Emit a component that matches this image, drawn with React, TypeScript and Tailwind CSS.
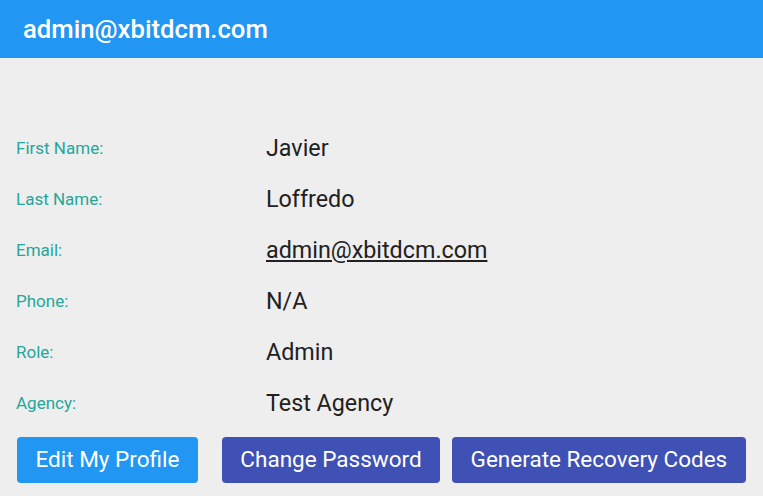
import React from "react";

const rows = [
  { label: "First Name:", value: "Javier" },
  { label: "Last Name:", value: "Loffredo" },
  { label: "Email:", value: "admin@xbitdcm.com", link: true },
  { label: "Phone:", value: "N/A" },
  { label: "Role:", value: "Admin" },
  { label: "Agency:", value: "Test Agency" },
];

export default function App() {
  return (
    <div className="min-h-[496px] w-full bg-[#eeeeee] font-['Roboto','Liberation_Sans',sans-serif]">
      <div className="flex h-[58px] items-center bg-[#2196f3] px-[23px]">
        <h1 className="text-[25.7px] font-medium text-white">admin@xbitdcm.com</h1>
      </div>

      <div className="pt-[65px]">
        {rows.map((row) => (
          <div key={row.label} className="flex h-[51px] items-center">
            <div className="w-[266px] pl-[16px] text-[17px] text-[#26a69a]">{row.label}</div>
            <div className="text-[23.3px] text-[#212121]">
              {row.link ? <a className="underline">{row.value}</a> : row.value}
            </div>
          </div>
        ))}
      </div>

      <div className="mt-[8px] flex px-[17px]">
        <button className="h-[46px] shrink-0 whitespace-nowrap rounded-[4px] bg-[#2196f3] px-[18.5px] text-[22.5px] text-white">
          Edit My Profile
        </button>
        <button className="ml-[24px] h-[46px] shrink-0 whitespace-nowrap rounded-[4px] bg-[#3f51b5] px-[18.5px] text-[22.5px] text-white">
          Change Password
        </button>
        <button className="ml-[12px] h-[46px] shrink-0 whitespace-nowrap rounded-[4px] bg-[#3f51b5] px-[18.5px] text-[22.5px] text-white">
          Generate Recovery Codes
        </button>
      </div>
    </div>
  );
}
